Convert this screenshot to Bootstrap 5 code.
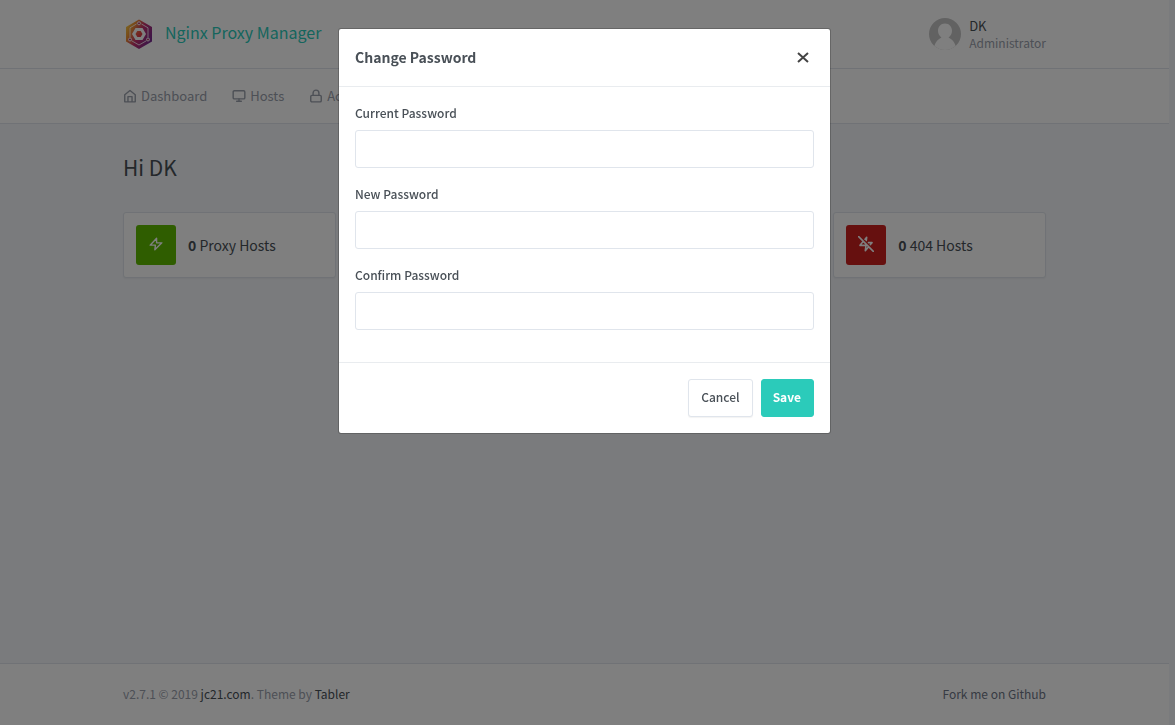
<!DOCTYPE html>
<html lang="en">
<head>
<meta charset="utf-8">
<meta name="viewport" content="width=device-width, initial-scale=1">
<title>Nginx Proxy Manager</title>
<link rel="stylesheet" href="https://cdn.jsdelivr.net/npm/bootstrap@5.3.0/dist/css/bootstrap.min.css">
<style>
  :root { --edge: #e0e5ec; --muted: #9aa0ac; --ink: #495057; --teal: #2bcbba; }
  body {
    font-family: "Noto Sans CJK SC", "Noto Sans", sans-serif;
    font-size: 13px; line-height: 21px; color: var(--ink);
    background: #f5f7fb; padding-right: 6px;
  }
  a { color: inherit; text-decoration: none; }
  svg.glyph { fill: none; stroke: currentColor; stroke-width: 2.4; stroke-linecap: round; stroke-linejoin: round; flex: none; }
  .page-width { max-width: 947px; padding-left: 12px; padding-right: 12px; }
  .top-bar { background: #fff; border-bottom: 1px solid var(--edge); min-height: 69px; }
  .brand-name { color: var(--teal); font-size: 16px; line-height: 24px; padding: 0 0 5px 10px; }
  .user-name { font-size: 13px; line-height: 18px; color: var(--ink); }
  .user-role { font-size: 12px; line-height: 16px; color: var(--muted); }
  .menu-bar { background: #fff; border-bottom: 1px solid var(--edge); }
  .menu-bar .nav { gap: 25px; }
  .menu-bar .nav-link { padding: 16px 0; line-height: 22px; color: var(--muted); display: flex; align-items: center; gap: 4px; white-space: nowrap; }
  .page-title { font-size: 21px; line-height: 30px; font-weight: 400; margin: 28px 0 30px; }
  .stat-card { border: 1px solid var(--edge); border-radius: 3px; box-shadow: 0 1px 2px rgba(0,0,0,.05); padding: 12px; background: #fff; color: var(--ink); font-size: 14px; white-space: nowrap; }
  .stamp { width: 40px; height: 40px; border-radius: 3px; color: #fff; padding-bottom: 2px; flex: none; }
  .stamp-green { background: #5eba00; }
  .stamp-yellow { background: #f1c40f; }
  .stamp-blue { background: #467fcf; }
  .stamp-red { background: #cd201f; }
  .page-footer { background: #fff; border-top: 1px solid var(--edge); font-size: 12px; padding: 19px 0 21px; color: var(--muted); }
  .page-footer a { color: #6e7687; }
  .page-footer .credit a { color: var(--ink); }
  .modal { padding-right: 6px; }
  .modal-dialog { max-width: 493px; }
  .modal-content { border: 1px solid rgba(0,0,0,.2); border-radius: 3px; color: var(--ink); }
  .modal-header { padding: 16px; border-color: #e9ecef; min-height: 58px; }
  .modal-title { font-size: 14px; line-height: 25px; font-weight: 700; }
  .close-x { border: 0; background: none; color: #444; padding: 4px; line-height: 0; }
  .modal-body { padding: 16px; }
  .form-label { display: block; font-size: 12px; line-height: 19px; font-weight: 500; margin-bottom: 8px; }
  .form-control { height: 38px; border-color: var(--edge); border-radius: 3px; font-size: 13px; }
  .modal-footer { padding: 16px; gap: 8px; border-color: #e9ecef; }
  .modal-footer > * { margin: 0; }
  .modal-footer .btn { font-size: 12px; line-height: 20px; padding: 7px 12px 9px; border-radius: 3px; font-weight: 500; }
  .btn-plain { color: var(--ink); background: #fff; border-color: var(--edge); box-shadow: 0 1px 1px rgba(0,0,0,.05); }
  .modal-footer .btn-teal { color: #fff; background: var(--teal); border-color: var(--teal); font-weight: 700; padding-left: 11px; }
</style>
</head>
<body>
<div class="d-flex flex-column min-vh-100">
  <header class="top-bar d-flex">
    <div class="container-fluid page-width d-flex align-items-center justify-content-between">
      <a href="#" class="d-flex align-items-center">
        <svg width="32" height="32" viewBox="0 0 32 32" aria-hidden="true">
          <defs>
            <linearGradient id="hex" x1="0" y1="0" x2="1" y2=".6">
              <stop offset="0" stop-color="#fbe44c"/><stop offset=".3" stop-color="#f09332"/>
              <stop offset=".6" stop-color="#c42f6d"/><stop offset="1" stop-color="#7b2c91"/>
            </linearGradient>
            <linearGradient id="core" x1="0" y1="0" x2="1" y2="1">
              <stop offset="0" stop-color="#f0683c"/><stop offset="1" stop-color="#d8264b"/>
            </linearGradient>
          </defs>
          <path d="M16 1.500 29 9v14.500L16 31 3 23.500V9z" fill="url(#hex)"/>
          <path d="M13.500 6 7 9.800v9.700M25 19.500V9.800L18.500 6M8.500 22.700 16 27l7.500-4.300" fill="none" stroke="#fff" stroke-width=".8"/>
          <g fill="#b73a70" stroke="#fff" stroke-width=".9"><circle cx="16" cy="5.300" r="1.500"/><circle cx="7" cy="21.500" r="1.500"/><circle cx="25" cy="21.500" r="1.500"/></g>
          <path d="M12.500 10h7l3.500 6-3.500 6h-7L9 16z" fill="#fff"/>
          <path d="M14.300 13h3.400l1.800 3-1.800 3h-3.400l-1.800-3z" fill="url(#core)"/>
        </svg>
        <span class="brand-name">Nginx Proxy Manager</span>
      </a>
      <a href="#" class="d-flex align-items-center">
        <svg width="32" height="32" viewBox="0 0 32 32" aria-hidden="true">
          <defs><clipPath id="round"><circle cx="16" cy="16" r="16"/></clipPath></defs>
          <g clip-path="url(#round)">
            <rect width="32" height="32" fill="#c5c5c5"/>
            <path d="M16 5.500c4.300 0 7 3.300 7 7.300 0 3-1.500 5.400-3.500 6.700 3.500 1.500 6 4.500 7.200 8.500V32H5.300v-4c1.200-4 3.700-7 7.200-8.500-2-1.300-3.500-3.700-3.500-6.700 0-4 2.700-7.300 7-7.300z" fill="#fff"/>
          </g>
        </svg>
        <span class="ms-2"><span class="d-block user-name">DK</span><span class="d-block user-role">Administrator</span></span>
      </a>
    </div>
  </header>

  <nav class="menu-bar" aria-label="Main">
    <div class="container-fluid page-width">
      <ul class="nav flex-nowrap overflow-hidden">
        <li><a class="nav-link" href="#"><svg class="glyph" width="14" height="14" viewBox="0 0 24 24"><path d="M3 10l9-7.500L21 10v12H3zM8.500 22v-9h7v9"/></svg>Dashboard</a></li>
        <li><a class="nav-link" href="#"><svg class="glyph" width="14" height="14" viewBox="0 0 24 24"><rect x="2" y="3" width="20" height="14" rx="2"/><path d="M8 21h8M12 17v4"/></svg>Hosts</a></li>
        <li><a class="nav-link" href="#"><svg class="glyph" width="14" height="14" viewBox="0 0 24 24"><rect x="3" y="11" width="18" height="11" rx="2"/><path d="M7 11V7a5 5 0 0 1 10 0v4"/></svg>Access Lists</a></li>
        <li><a class="nav-link" href="#">Users</a></li>
        <li><a class="nav-link" href="#">Settings</a></li>
      </ul>
    </div>
  </nav>

  <main class="flex-grow-1">
    <div class="container-fluid page-width">
      <h1 class="page-title">Hi DK</h1>
      <div class="row row-cols-4">
        <div class="col"><a href="#" class="stat-card d-flex align-items-center">
          <span class="stamp stamp-green d-flex align-items-center justify-content-center me-2"><svg class="glyph" width="14" height="14" viewBox="0 0 24 24"><path d="M13 2 2 14h9l-1 8 12-12h-9z"/></svg></span>
          <span class="ms-1"><b>0</b> Proxy Hosts</span></a></div>
        <div class="col"><a href="#" class="stat-card d-flex align-items-center">
          <span class="stamp stamp-yellow me-2"></span><span class="ms-1"><b>0</b> Redirection Hosts</span></a></div>
        <div class="col"><a href="#" class="stat-card d-flex align-items-center">
          <span class="stamp stamp-blue me-2"></span><span class="ms-1"><b>0</b> Streams</span></a></div>
        <div class="col"><a href="#" class="stat-card d-flex align-items-center">
          <span class="stamp stamp-red d-flex align-items-center justify-content-center me-2"><svg class="glyph" width="16" height="16" viewBox="0 0 24 24"><path d="M12.400 6.800 13 2l-2.400 2.900M18.600 12.900 21 10h-5.300M8 8l-5 6h9l-1 8 5-6M1 1l22 22"/></svg></span>
          <span class="ms-1"><b>0</b> 404 Hosts</span></a></div>
      </div>
    </div>
  </main>

  <footer class="page-footer">
    <div class="container-fluid page-width d-flex justify-content-between">
      <div class="credit">v2.7.1 © 2019 <a href="#">jc21.com</a>. Theme by <a href="#">Tabler</a></div>
      <a href="#">Fork me on Github</a>
    </div>
  </footer>
</div>

<div class="modal-backdrop show"></div>
<div class="modal show d-block" tabindex="-1" role="dialog" aria-labelledby="dialog-title">
  <div class="modal-dialog">
    <form class="modal-content">
      <div class="modal-header">
        <h2 class="modal-title" id="dialog-title">Change Password</h2>
        <button type="button" class="close-x" aria-label="Close"><svg width="14" height="14" viewBox="0 0 14 14" fill="none" stroke="currentColor" stroke-width="2"><path d="m2 2 10 9M12 2 2 11"/></svg></button>
      </div>
      <div class="modal-body">
        <div class="mb-3"><label class="form-label" for="current">Current Password</label><input class="form-control" type="password" id="current"></div>
        <div class="mb-3"><label class="form-label" for="new">New Password</label><input class="form-control" type="password" id="new"></div>
        <div class="mb-3"><label class="form-label" for="confirm">Confirm Password</label><input class="form-control" type="password" id="confirm"></div>
      </div>
      <div class="modal-footer">
        <button type="button" class="btn btn-plain">Cancel</button>
        <button type="button" class="btn btn-teal">Save</button>
      </div>
    </form>
  </div>
</div>
<script src="https://cdn.jsdelivr.net/npm/bootstrap@5.3.0/dist/js/bootstrap.bundle.min.js"></script>
</body>
</html>
